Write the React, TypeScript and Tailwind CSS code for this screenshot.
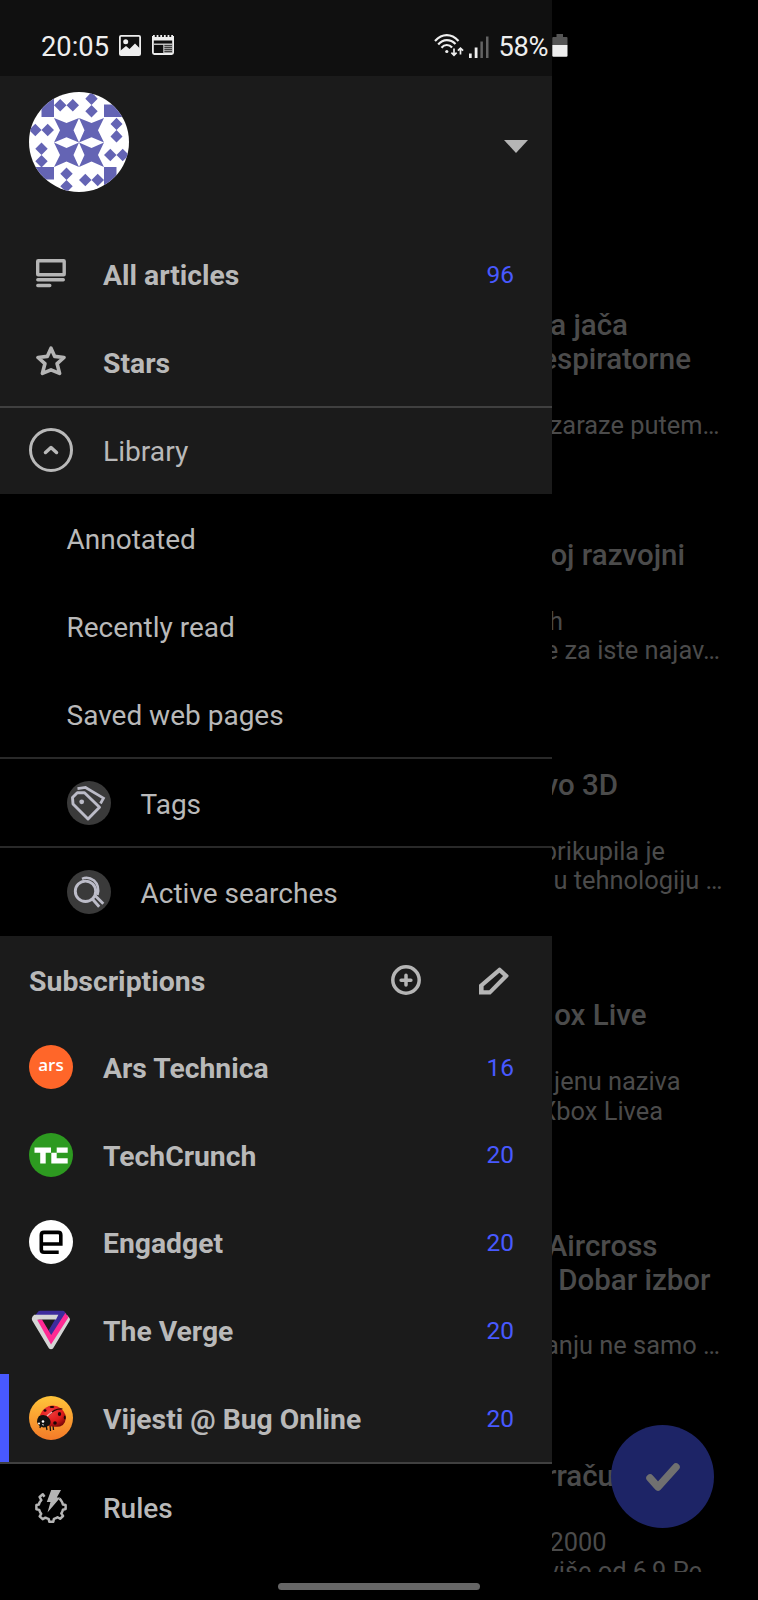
import type { ReactNode } from 'react';

const Identicon = () => (
  <svg viewBox="0 0 100 100" className="h-[100px] w-[100px] rounded-full bg-white" fill="#6464b4">
    <path d="M12.500 0h12.500v25H12.500zM75 12.500h25V25H75zM0 75h25v12.500H0zM75 75h12.500v25H75z" />
    <path d="M25 13.200L31.200 7l6.300 6.200L43.800 7 50 13.200 43.800 19.500 37.500 13.200 31.200 19.500zM62.500 0L68.700 6.800 62.500 13 68.700 19.300 62.500 25.500 56.300 19.300 62.500 13 56.300 6.800z" />
    <path d="M87.500 25.800L93.500 32 87.500 38l6 6.500-6 6-6-6L87.500 38l-6-6zM75 63l6.300-6.300L87.500 63l6.200-6.300L100 63l-6.300 6.300L87.500 63l-6.200 6.300z" />
    <path d="M0 38l6.300-6.300L12.500 38l6.200-6.300L25 38l-6.300 6.300L12.500 38l-6.200 6.300zM12.500 50.500l6.200 6.200L12.500 63l6.200 6.200-6.200 6.300-6.200-6.300L12.500 63l-6.200-6.300z" />
    <path d="M37.500 75.500l6.200 6.200L37.500 88l6.200 6.200-6.200 6.300-6.200-6.300L37.500 88l-6.200-6.300zM50 88l6.300-6.300L62.500 88l6.200-6.300L75 88l-6.300 6.300L62.500 88l-6.200 6.300z" />
    <path d="M25 26L37.500 31 50 26 44.500 38.300 50 50.600 37.500 45.300 25 50.600 31 38.300z" />
    <path d="M50 26L62.500 31 75 26 69 38.300 75 50.600 62.500 45.300 50 50.600 55.500 38.300z" />
    <path d="M25 50.600L37.500 56 50 50.600 44.500 63 50 75 37.500 69.500 25 75 31 63z" />
    <path d="M50 50.600L62.500 56 75 50.600 69 63 75 75 62.500 69.500 50 75 55.500 63z" />
  </svg>
);

const PictureIcon = () => (
  <svg viewBox="0 0 22 21" className="h-[21px] w-[22px]">
    <rect x=".9" y=".9" width="20.200" height="19.200" rx="1.200" fill="none" stroke="#eee" strokeWidth="1.800" />
    <circle cx="6.700" cy="6.800" r="2.500" fill="#eee" />
    <path d="M1 16l6-5 3.500 3L16 8.500l5 5V20H1z" fill="#eee" />
  </svg>
);

const NewsIcon = () => (
  <svg viewBox="0 0 22 20" className="h-5 w-[22px]">
    <path d="M.9 1v16.600q0 1.400 1.400 1.400h17.400q1.400 0 1.400-1.400V1" fill="none" stroke="#eee" strokeWidth="1.800" />
    <path d="M1 2h20v3.500H1z" fill="#eee" />
    <path d="M1 1h20" stroke="#eee" strokeWidth="2" strokeDasharray="1.800 1.840" />
    <path d="M2 9.200h18" stroke="#eee" strokeWidth="1.200" />
    <path d="M11.800 9v9.500M12 11.200h8M12 13.200h8M12 15.200h8M12 17.200h8" stroke="#ccc" strokeWidth="1.100" />
  </svg>
);

const WifiIcon = () => (
  <svg viewBox="0 0 30 23" className="h-[23px] w-[30px]" fill="none" stroke="#eee" strokeWidth="2.200">
    <path d="M1 7Q6.500 1.200 12.800 1.200T24.500 7" />
    <path d="M4.200 10.500Q8 6.200 12.800 6.200T21.500 10" />
    <path d="M7.500 13.700q2.300-2.700 5.300-2.700t5.300 2.600" />
    <circle cx="12.800" cy="17.500" r="1.600" fill="#eee" stroke="none" />
    <path d="M20 14.500v7M17.400 18.700l2.600 2.600 2.600-2.600M26.500 20.500v-6M23.900 16.700l2.600-2.600 2.600 2.600" strokeWidth="1.700" />
  </svg>
);

const SignalIcon = () => (
  <svg viewBox="0 0 20 22" className="h-[22px] w-5">
    <path d="M0 17.500h2.700V22H0zM5.700 11.500h2.800V22H5.700z" fill="#eee" />
    <path d="M11.400 5.500h2.500V22h-2.500zM17 .5h2.500V22H17z" fill="#636363" />
  </svg>
);

const BatteryIcon = () => (
  <svg viewBox="0 0 16 23" className="h-[23px] w-4">
    <path d="M4.500 0h6.500v3H14.500q1 0 1 1v7H.3V4q0-1 1-1h3.200z" fill="#555" />
    <path d="M.3 11h15.200v10.500q0 1.200-1.200 1.200H1.500Q.3 22.700.3 21.500z" fill="#eee" />
  </svg>
);

const ArticlesIcon = () => (
  <svg viewBox="0 0 30 29" className="-mt-[1px] h-[29px] w-[30px]" fill="none" stroke="#b5b5b5" strokeWidth="3.400">
    <rect x="1.700" y="1.700" width="26.500" height="14" rx=".5" />
    <path d="M1.800 20.800h25.500M1.800 26.500h12" strokeLinecap="round" />
  </svg>
);

const StarIcon = () => (
  <svg viewBox="0 0 30 30" className="-mt-[3px] h-[30px] w-[30px]" fill="none" stroke="#b5b5b5" strokeWidth="3.600" strokeLinejoin="round">
    <path d="M15 2.200l3.700 8.200 9.300 1.100-6.900 6.200 2.500 9.700L15 23.800l-8.600 3.600 2.500-9.700L2 11.500l9.300-1.100z" />
  </svg>
);

const LibraryIcon = () => (
  <svg viewBox="0 0 44 44" className="h-11 w-11" fill="none" stroke="#b9b9b9">
    <circle cx="22" cy="22" r="20.500" strokeWidth="3" />
    <path d="M16.500 24.500l5.500-5 5.500 5" strokeWidth="3.500" strokeLinecap="round" strokeLinejoin="round" />
  </svg>
);

const TagsIcon = () => (
  <svg viewBox="0 0 44 44" className="h-11 w-11" fill="none" stroke="#bcbcc8" strokeWidth="2.900">
    <circle cx="22" cy="22" r="22" fill="#3a3a3a" stroke="none" />
    <path d="M5.500 16.500l4.800-4.800h7.200L32.500 26.300 21 38 6 23z" strokeLinejoin="round" />
    <circle cx="14.700" cy="20.800" r="2.400" fill="#bcbcc8" stroke="none" />
    <path d="M10.500 7.700l8-1.200L36.500 17.200 33.500 22.500" strokeWidth="2.700" />
  </svg>
);

const SearchesIcon = () => (
  <svg viewBox="0 0 44 44" className="h-11 w-11" fill="none" stroke="#bcbcc8" strokeWidth="2.900">
    <circle cx="22" cy="22" r="22" fill="#3a3a3a" stroke="none" />
    <circle cx="18.500" cy="21.300" r="10.200" />
    <path d="M25 28.500l7.200 8.300M28.300 25.700l8 8" />
    <path d="M15 8.800Q21 6 27 10.500 33 16 30.500 25" strokeWidth="2.500" />
  </svg>
);

const PlusIcon = () => (
  <svg viewBox="0 0 30 30" className="h-[30px] w-[30px]" fill="none" stroke="#b5b5b5" strokeWidth="3.500">
    <circle cx="15" cy="15" r="13.200" />
    <path d="M15 10.300v9.800M10.100 15.200h9.800" strokeWidth="3.500" strokeLinecap="round" />
  </svg>
);

const PencilIcon = () => (
  <svg viewBox="0 0 91 84" className="h-7 w-[30px]" fill="#b5b5b5" fillRule="evenodd">
    <path d="M0 53L60 2q2-2 5 0l24 22q2 2 0 5L35 83H0zM14 58v12h17l42-43-11-10z" />
  </svg>
);

const ArsLogo = () => (
  <div className="flex h-11 w-11 items-center justify-center rounded-full bg-[#ff6629] pb-1 font-['Open_Sans'] text-[17px] font-semibold text-white">
    ars
  </div>
);

const TechCrunchLogo = () => (
  <svg viewBox="0 0 44 44" className="h-11 w-11">
    <circle cx="22" cy="22" r="22" fill="#2d9a20" />
    <path d="M5.500 14.500H22v5.300h-5.300v10.700h-5.500V19.800H5.500zM27.700 14.500h11v5.300h-11zM22.300 19.800h5.400v5.400h11v5.300H22.300z" fill="#fff" />
  </svg>
);

const EngadgetLogo = () => (
  <svg viewBox="0 0 44 44" className="h-11 w-11">
    <circle cx="22" cy="22" r="22" fill="#fff" />
    <path d="M12.300 24h19.500V15q0-2.600-2.600-2.600H15q-2.700 0-2.700 2.600v14.500q0 2.700 2.700 2.700h14.700" fill="none" stroke="#000" strokeWidth="3.600" />
  </svg>
);

const VergeLogo = () => (
  <svg viewBox="0 0 40 40" className="h-10 w-10">
    <path d="M1 7.500Q.5 9 1.200 10.500L18 38.500q2 1.500 4 0L38.500 11q1-1.500 0-3L36 5 20 31.500 6 7z" fill="#d5d5d5" />
    <path d="M4.500 5L7.500 1.200Q8 .8 9 .8h23q1 0 1.500.7l2 2.500L20.500 26l-3-5.500L26.700 5z" fill="#3d2c9c" />
    <path d="M6 9.500h5l9.200 15.500L34.300 3l3.200 4.300L20 34.500z" fill="#ff2a93" />
    <path d="M1.200 7l2-2.200h24.200L25 9.500H2z" fill="#d5d5d5" />
  </svg>
);

const BugLogo = () => (
  <svg viewBox="0 0 44 44" className="h-11 w-11">
    <defs>
      <linearGradient id="amber" x1="0" y1="0" x2="0" y2="1">
        <stop offset="0" stopColor="#ffc53a" />
        <stop offset="1" stopColor="#f47a28" />
      </linearGradient>
      <radialGradient id="shell" cx=".4" cy=".3" r=".8">
        <stop offset="0" stopColor="#f23c3c" />
        <stop offset=".6" stopColor="#dc1919" />
        <stop offset="1" stopColor="#6a0505" />
      </radialGradient>
    </defs>
    <circle cx="22" cy="22" r="22" fill="url(#amber)" />
    <path d="M12 27l-1 5M17 29l1 5M21 29l.500 6M24 29l.500 5" stroke="#111" strokeWidth="1.300" fill="none" />
    <path d="M11 19Q15 9.500 24 9.500 33 10 36.500 19 38 28 31 30.500 22 31.500 17 29z" fill="url(#shell)" />
    <path d="M10 20q6-3 10 2 3 4 .500 7-3 2.500-6 2.500-5-1-6.500-5.500Q8 22.500 10 20z" fill="#111" />
    <path d="M20 19Q26 12 33.500 13" stroke="#240505" strokeWidth="1.100" fill="none" />
    <g fill="#190707">
      <ellipse cx="23" cy="11" rx="2.300" ry="1.100" />
      <ellipse cx="16" cy="14.500" rx="1.500" ry="1.200" />
      <ellipse cx="30.500" cy="18" rx="1.700" ry="2.100" />
      <ellipse cx="26" cy="27" rx="1.800" ry="1.800" />
      <ellipse cx="35.800" cy="21.500" rx="1" ry="2" />
    </g>
    <path d="M18 20l5-4" stroke="#f4b5b5" strokeWidth="1.300" />
    <circle cx="14" cy="25.500" r="1.300" fill="#fff" />
    <circle cx="10" cy="27.500" r="1" fill="#fff" />
    <path d="M13 28.500l2 .6" stroke="#ddd" strokeWidth=".9" />
  </svg>
);

const RulesIcon = () => (
  <svg viewBox="0 0 32 33" className="-mt-[1px] h-[33px] w-8">
    <path
      d="M9.500 6.800L7.800 4.300 4.600 7l1.700 3.100Q4.400 12 3.900 14.500L1.400 15v4.300l2.800.6q.7 2.300 2 3.900l-1.500 2.500 3 2.900 2.700-1.500q1.600.9 3.300 1.200l.6 2.900h4l.6-2.900q2.200-.5 3.700-1.600l2.500 1.500 2.900-2.800-1.700-2.600q1.200-1.700 1.600-3.700l2.700-.6V15l-2.700-.5q-.5-2.200-2-4.200l-1.300-1.700"
      fill="none" stroke="#b5b5b5" strokeWidth="2.500" strokeLinejoin="round"
    />
    <path d="M16.200 0h9.800l-4.200 7.500h3.500L12.500 22.500l3-10.500h-3.700z" fill="#b5b5b5" />
  </svg>
);

interface RowProps {
  icon: ReactNode;
  label: string;
  count?: number;
  weight?: string;
  active?: boolean;
  pad?: string;
}

const Row = ({ icon, label, count, weight = 'text-[28.300px] font-bold', active, pad = 'pt-1' }: RowProps) => (
  <div className={`flex h-[87.750px] items-center border-l-[9px] pr-[38px] ${pad} ${active ? 'border-[#4859ff]' : 'border-transparent'}`}>
    <div className="ml-5 flex w-11 justify-center pb-1">{icon}</div>
    <span className={`ml-[30px] flex-1 leading-8 ${weight}`}>{label}</span>
    {count !== undefined && <span className="-mt-0.5 text-[24.500px] text-[#4859ff]">{count}</span>}
  </div>
);

const SubRow = ({ label }: { label: string }) => (
  <div className="flex h-[87.750px] items-center pl-[66.500px] pt-[5px] text-[28px]">{label}</div>
);

const GroupRow = ({ icon, label }: { icon: ReactNode; label: string }) => (
  <div className="flex h-[89px] items-center border-t-2 border-[#292929] pl-[67px] text-[28px]">
    {icon}
    <span className="ml-[29.500px] pt-1">{label}</span>
  </div>
);

interface Line {
  text: string;
  width: string;
}

const articles: { title: Line[]; body: Line[] }[] = [
  {
    title: [{ text: 'a jača', width: 'w-[76px]' }, { text: 'espiratorne', width: 'w-[139px]' }],
    body: [{ text: 'zaraze putem…', width: 'w-[167.500px]' }],
  },
  {
    title: [{ text: 'oj razvojni', width: 'w-[133px]' }],
    body: [{ text: 'h', width: 'w-[11px]' }, { text: 'e za iste najav…', width: 'w-[168px]' }],
  },
  {
    title: [{ text: 'vo 3D', width: 'w-[66px]' }],
    body: [{ text: 'prikupila je', width: 'w-[113px]' }, { text: 'u tehnologiju …', width: 'w-[170.500px]' }],
  },
  {
    title: [{ text: 'ox Live', width: 'w-[94.500px]' }],
    body: [{ text: 'jenu naziva', width: 'w-[128.500px]' }, { text: 'Xbox Livea', width: 'w-[111px]' }],
  },
  {
    title: [{ text: 'Aircross', width: 'w-[105.500px]' }, { text: 'Dobar izbor', width: 'w-[158.500px]' }],
    body: [{ text: 'anju ne samo …', width: 'w-[168px]' }],
  },
  {
    title: [{ text: 'rraču', width: 'w-[62px]' }],
    body: [{ text: '2000', width: 'w-[54.500px]' }, { text: 'više od 6,9 Pe', width: 'w-[150px]' }],
  },
];

const TextLine = ({ line, height }: { line: Line; height: string }) => (
  <div className={`flex items-center justify-end overflow-hidden whitespace-nowrap ${height} ${line.width}`}>
    <span className="shrink-0">{line.text}</span>
  </div>
);

export default function App() {
  return (
    <div className="relative flex h-[1600px] w-[758px] overflow-hidden bg-black font-['Roboto',sans-serif]">
      <aside className="flex w-[552px] shrink-0 flex-col bg-[#1b1b1b] text-[#b9b9b9]">
        <header className="flex h-[76px] items-center bg-[#101010] pl-[41px] pt-[18px] text-[27.300px] text-[#eee]">
          <span className="mr-[10.500px]">20:05</span>
          <div className="-mt-[3px] flex gap-[11px]">
            <PictureIcon />
            <NewsIcon />
          </div>
          <div className="relative ml-auto flex w-[118px] shrink-0 items-center">
            <div className="-mt-[3px]"><WifiIcon /></div>
            <div className="ml-[5px]"><SignalIcon /></div>
            <span className="ml-[9.500px] tracking-[-0.3px]">58%</span>
            <div className="absolute -right-4 top-[7px]"><BatteryIcon /></div>
          </div>
        </header>
        <div className="flex h-[156px] justify-between pl-[29px] pr-6 pt-4">
          <Identicon />
          <svg viewBox="0 0 24 13" className="mt-[48px] h-[13px] w-6"><path d="M0 0h24L12 13z" fill="#b5b5b5" /></svg>
        </div>
        <Row icon={<ArticlesIcon />} label="All articles" count={96} pad="pt-0" />
        <div className="-mt-[1.500px]"><Row icon={<StarIcon />} label="Stars" pad="pt-[4px]" /></div>
        <div className="h-[88px] border-t-2 border-[#404040]">
          <Row icon={<LibraryIcon />} label="Library" weight="text-[28.200px] font-normal" pad="pt-0" />
        </div>
        <section className="flex h-[442px] flex-col bg-black">
          <SubRow label="Annotated" />
          <SubRow label="Recently read" />
          <SubRow label="Saved web pages" />
          <GroupRow icon={<TagsIcon />} label="Tags" />
          <GroupRow icon={<SearchesIcon />} label="Active searches" />
        </section>
        <div className="flex h-[87px] items-center pl-[29px] pr-[43px]">
          <h2 className="flex-1 pt-[5px] text-[28.400px] font-bold">Subscriptions</h2>
          <PlusIcon />
          <div className="ml-[58px] pt-0.5"><PencilIcon /></div>
        </div>
        <Row icon={<ArsLogo />} label="Ars Technica" count={16} />
        <Row icon={<TechCrunchLogo />} label="TechCrunch" count={20} />
        <Row icon={<EngadgetLogo />} label="Engadget" count={20} />
        <Row icon={<VergeLogo />} label="The Verge" count={20} />
        <Row icon={<BugLogo />} label="Vijesti @ Bug Online" count={20} active />
        <footer className="flex-1 border-t-2 border-[#404040] bg-black">
          <Row icon={<RulesIcon />} label="Rules" weight="text-[28px] font-medium" pad="pt-[3px]" />
        </footer>
      </aside>
      <main className="h-[1572px] w-[206px] overflow-hidden pt-[308px] text-[#4b4b4b]">
        {articles.map((article) => (
          <article key={article.title[0].text} className="h-[230.200px]">
            <div className="text-[29.500px] font-medium">
              {article.title.map((line) => <TextLine key={line.text} line={line} height="h-[34px]" />)}
            </div>
            <div className="mt-[34px] text-[25.400px]">
              {article.body.map((line) => <TextLine key={line.text} line={line} height="h-[29.400px]" />)}
            </div>
          </article>
        ))}
      </main>
      <button className="absolute left-[611px] top-[1425px] flex h-[103px] w-[103px] items-center justify-center rounded-full bg-[#1d2466]">
        <svg viewBox="0 0 34 28" className="h-7 w-[34px]" fill="none" stroke="#707070" strokeWidth="7.500" strokeLinecap="round" strokeLinejoin="round">
          <path d="M4 15l8 9L30 4" />
        </svg>
      </button>
      <div className="absolute left-[278px] top-[1583px] h-[7px] w-[202px] rounded-full bg-[#666]" />
    </div>
  );
}
